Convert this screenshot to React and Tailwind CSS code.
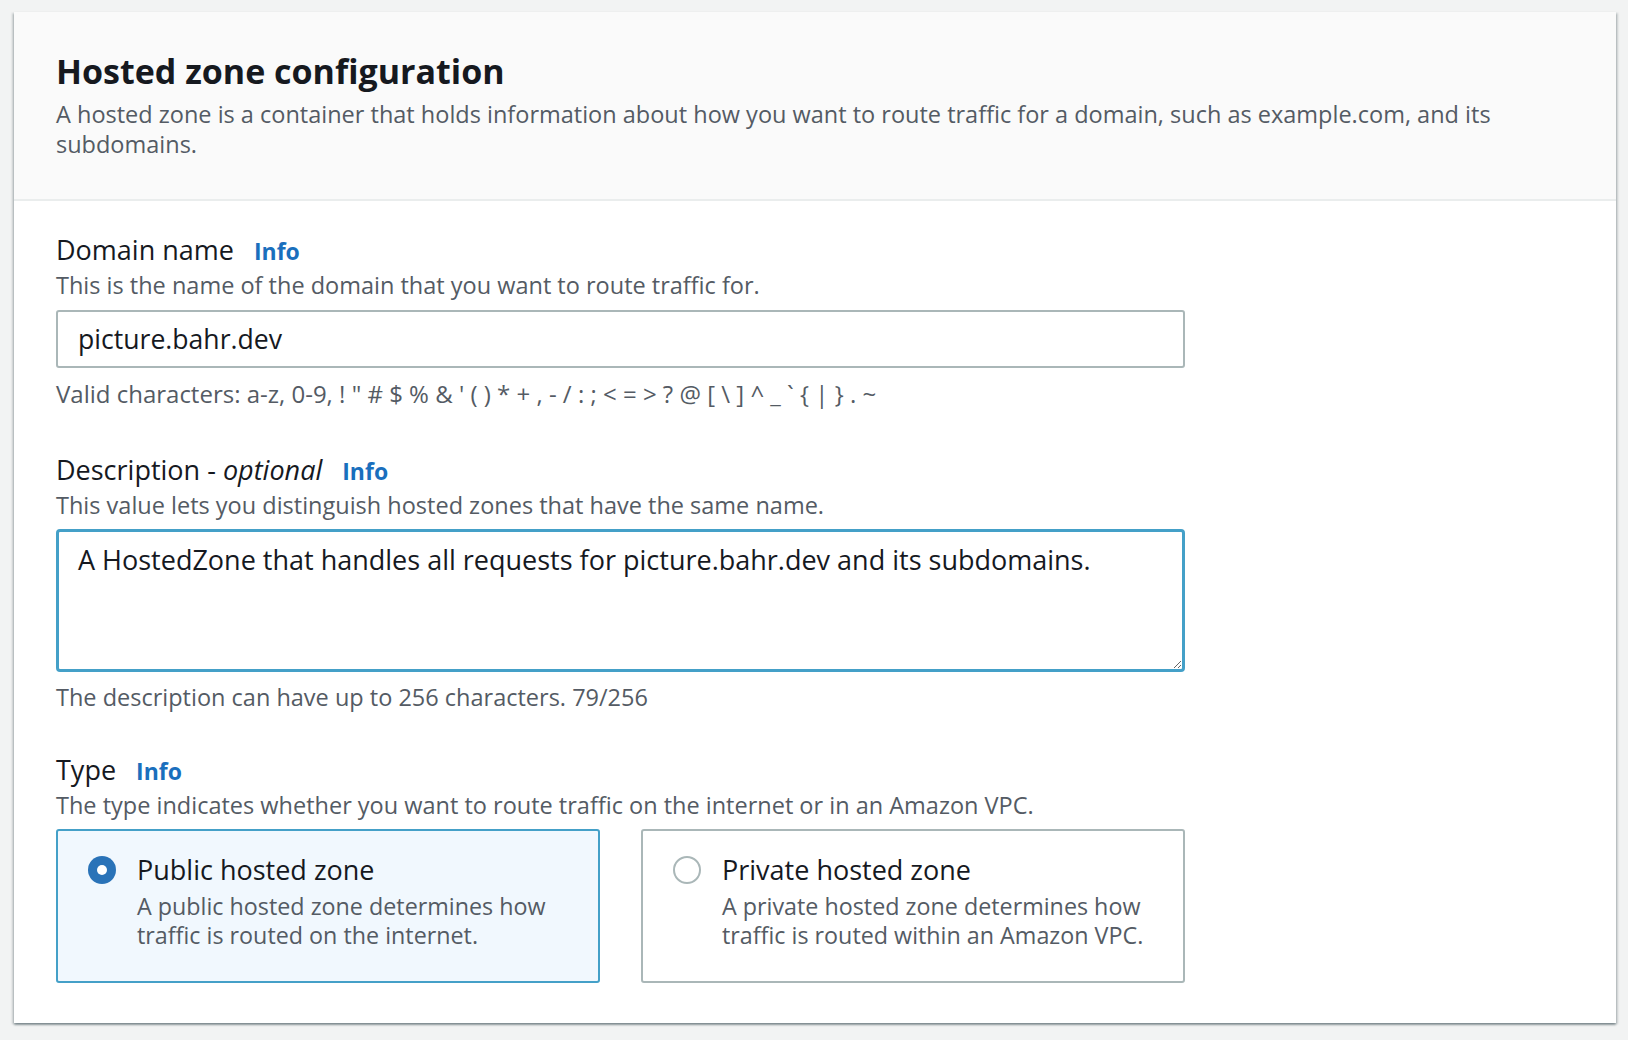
import React from 'react';

const font = { fontFamily: '"Open Sans", "Noto Sans", "Liberation Sans", sans-serif' };

function InfoLink() {
  return <a href="#" className="ml-[20px] text-[23px] font-bold text-[#1a6fbd] no-underline">Info</a>;
}

function RadioCard({ checked, title, children }) {
  return (
    <label
      className={
        checked
          ? 'flex gap-[21px] rounded-[3px] border-2 border-[#44a0c8] bg-[#f1f8fe] pl-[30px] pr-[20px] pt-[23px] pb-[31px] cursor-pointer'
          : 'flex gap-[21px] rounded-[3px] border-2 border-[#aab7b8] bg-white pl-[30px] pr-[20px] pt-[23px] pb-[31px] cursor-pointer'
      }
    >
      <span className="mt-[2px] shrink-0">
        {checked ? (
          <span className="flex h-[28px] w-[28px] items-center justify-center rounded-full bg-[#2a73b8]">
            <span className="h-[10px] w-[10px] rounded-full bg-white" />
          </span>
        ) : (
          <span className="block h-[28px] w-[28px] rounded-full border-2 border-[#aab7b8] bg-white" />
        )}
      </span>
      <span className="flex flex-col">
        <span className="text-[27px] leading-[32px] text-[#16191f]">{title}</span>
        <span className="mt-[6px] text-[23.3px] leading-[29px] text-[#545b64]">{children}</span>
      </span>
    </label>
  );
}

export default function App() {
  return (
    <div className="min-h-screen bg-[#f2f3f3] pt-[12px] pl-[14px] pr-[12px] pb-[16px]" style={font}>
      <div className="bg-white shadow-[0_2px_2px_0_rgba(0,28,36,0.35),2px_1px_2px_0_rgba(0,28,36,0.15),-2px_1px_2px_0_rgba(0,28,36,0.15)]">
        {/* header */}
        <div className="bg-[#fafafa] border-b-2 border-[#eaeded] px-[42px] pt-[37px] pb-[40px]">
          <h2 className="text-[34px] leading-[44px] font-bold text-[#16191f]">Hosted zone configuration</h2>
          <p className="mt-[6px] text-[23.5px] leading-[30px] text-[#545b64]">
            A hosted zone is a container that holds information about how you want to route traffic for a domain, such as example.com, and its subdomains.
          </p>
        </div>

        <div className="w-[1213px] px-[42px] pt-[33px] pb-[40px]">
          {/* domain name */}
          <div>
            <div className="flex items-baseline text-[27px] leading-[32px] text-[#16191f]">
              Domain name <InfoLink />
            </div>
            <p className="mt-[3px] text-[23.5px] leading-[30px] text-[#545b64]">
              This is the name of the domain that you want to route traffic for.
            </p>
            <input
              type="text"
              defaultValue="picture.bahr.dev"
              className="mt-[10px] block h-[58px] w-full rounded-[3px] border-2 border-[#aab7b8] bg-white pl-[20px] text-[26.6px] text-[#16191f] outline-none"
              style={font}
            />
            <p className="mt-[11px] text-[24px] leading-[30px] text-[#545b64]">
              Valid characters: a-z, 0-9, ! " # $ % &amp; ' ( ) * + , - / : ; &lt; = &gt; ? @ [ \ ] ^ _ ` {'{'} | {'}'} . ~
            </p>
          </div>

          {/* description */}
          <div className="mt-[45px]">
            <div className="flex items-baseline text-[27px] leading-[32px] text-[#16191f]">
              <span>
                Description - <i>optional</i>
              </span>
              <InfoLink />
            </div>
            <p className="mt-[3px] text-[23.5px] leading-[30px] text-[#545b64]">
              This value lets you distinguish hosted zones that have the same name.
            </p>
            <textarea
              defaultValue="A HostedZone that handles all requests for picture.bahr.dev and its subdomains."
              className="mt-[9px] block h-[143px] w-full rounded-[4px] border-[3px] border-[#44a0c8] bg-white pl-[19px] pt-[12px] text-[27px] leading-[32px] text-[#16191f] outline-none"
              style={font}
            />
            <p className="mt-[10px] text-[23.5px] leading-[30px] text-[#545b64]">
              The description can have up to 256 characters. 79/256
            </p>
          </div>

          {/* type */}
          <div className="mt-[42px]">
            <div className="flex items-baseline text-[27px] leading-[32px] text-[#16191f]">
              Type <InfoLink />
            </div>
            <p className="mt-[3px] text-[23.5px] leading-[30px] text-[#545b64]">
              The type indicates whether you want to route traffic on the internet or in an Amazon VPC.
            </p>
            <div className="mt-[9px] grid grid-cols-2 gap-[41px]">
              <RadioCard checked title="Public hosted zone">
                A public hosted zone determines how traffic is routed on the internet.
              </RadioCard>
              <RadioCard title="Private hosted zone">
                A private hosted zone determines how traffic is routed within an Amazon VPC.
              </RadioCard>
            </div>
          </div>
        </div>
      </div>
    </div>
  );
}
